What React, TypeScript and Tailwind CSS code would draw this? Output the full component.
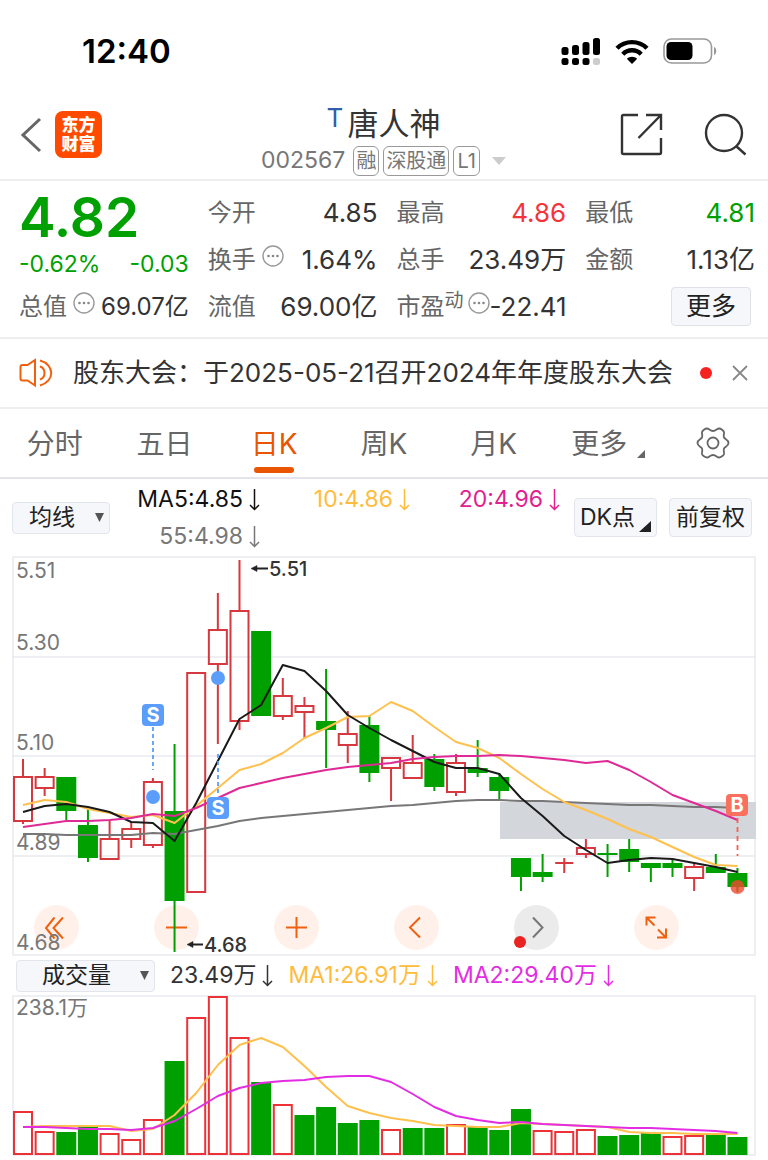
import React, { useState } from 'react';

type Candle = {
  up: boolean;
  high: number;
  top: number;
  bottom: number;
  low: number;
};

const STEP = 21.65;
const cx = (i: number) => 11 + i * STEP;

const c = (up: boolean, high: number, top: number, bottom: number, low: number): Candle => ({
  up,
  high,
  top,
  bottom,
  low
});

const candles: Candle[] = [
  c(true, 203, 221, 265, 268),
  c(true, 212, 221, 232, 240),
  c(false, 221, 221, 255, 264),
  c(false, 253, 269, 302, 306),
  c(true, 264, 283, 303, 303),
  c(true, 266, 273, 283, 292),
  c(true, 222, 226, 289, 292),
  c(false, 188, 255, 345, 396),
  c(true, 117, 117, 336, 336),
  c(true, 37, 74, 108, 188),
  c(true, 4, 55, 165, 174),
  c(false, 75, 75, 160, 160),
  c(true, 122, 140, 160, 164),
  c(true, 141, 150, 156, 183),
  c(false, 113, 165, 174, 212),
  c(true, 155, 178, 189, 207),
  c(false, 160, 169, 217, 226),
  c(true, 202, 202, 212, 245),
  c(true, 179, 207, 222, 222),
  c(false, 198, 203, 231, 235),
  c(true, 198, 207, 236, 240),
  c(false, 184, 212, 217, 221),
  c(false, 217, 221, 235, 244),
  c(false, 302, 302, 321, 335),
  c(false, 298, 316, 321, 326),
  c(true, 302, 307, 307, 317),
  c(true, 283, 292, 298, 302),
  c(false, 288, 297, 299, 321),
  c(false, 283, 293, 306, 316),
  c(false, 307, 307, 312, 326),
  c(false, 303, 307, 312, 321),
  c(true, 307, 311, 322, 335),
  c(false, 298, 311, 317, 317),
  c(false, 312, 317, 331, 336)
];

const ma5 = [
  256, 250, 248, 251, 256, 266, 267, 285, 247, 205, 163, 149, 109, 115, 135, 159, 172, 184, 195,
  206, 212, 212, 218, 242, 260, 280, 294, 307, 304, 302, 303, 307, 311, 316
];
const ma10 = [
  249, 244, 246, 253, 257, 261, 259, 267, 250, 232, 214, 208, 197, 182, 172, 161, 160, 146, 155,
  171, 186, 192, 202, 218, 233, 246, 254, 263, 273, 281, 291, 301, 309, 310
];
const ma20 = [
  271, 268, 265, 265, 264, 262, 258, 260, 252, 242, 232, 227, 222, 218, 214, 211, 209, 207, 203,
  201, 200, 200, 199, 200, 202, 204, 207, 205, 214, 226, 239, 247, 255, 264
];
const ma55 = [
  278, 278, 279, 279, 279, 279, 277, 278, 274, 270, 265, 262, 260, 258, 256, 254, 252, 250, 249,
  247, 245, 244, 244, 245, 245, 246, 247, 248, 249, 249, 250, 251, 251, 252
];

// bar tops, drawn down to y = 160
const volumes: [number, boolean][] = [
  [116, true], [136, true], [137, false], [132, false], [138, true], [144, true], [124, true],
  [66, false], [22, true], [1, true], [42, true], [87, false], [109, true], [120, false],
  [112, false], [128, false], [125, false], [134, true], [133, false], [133, false], [129, true],
  [132, false], [135, false], [114, false], [135, true], [136, true], [134, true], [141, false],
  [140, false], [138, false], [141, true], [140, true], [140, false], [142, false]
];
const volMa1 = [
  132, 131, 131, 131, 131, 136, 134, 120, 98, 70, 50, 43, 52, 71, 92, 111, 118, 123, 126, 130, 131,
  132, 132, 128, 129, 130, 131, 132, 137, 138, 138, 139, 139, 139
];
const volMa2 = [
  132, 132, 133, 134, 134, 135, 133, 126, 114, 101, 93, 88, 86, 85, 82, 81, 81, 87, 99, 112, 121,
  125, 128, 127, 129, 130, 131, 132, 133, 133, 134, 135, 136, 138
];

const toPoints = (ys: number[]) => ys.map((y, i) => `${cx(i)},${y}`).join(' ');

const Line: React.FC<{ ys: number[]; color: string }> = ({ ys, color }) => (
  <polyline points={toPoints(ys)} fill="none" stroke={color} strokeWidth="2" strokeLinejoin="round" />
);

const DownArrow: React.FC = () => (
  <svg className="h-[23px] w-[11px] shrink-0" viewBox="0 0 11 23" fill="none" stroke="currentColor" strokeWidth="1.5">
    <path d="M5.5 1v20.500M1 17l4.500 4.500L10 17" />
  </svg>
);

const InfoDots: React.FC = () => (
  <svg className="mb-2 h-[22px] w-[22px] shrink-0" viewBox="0 0 22 22" aria-hidden="true">
    <circle cx="11" cy="11" r="10" fill="none" stroke="#999" strokeWidth="1.400" />
    <circle cx="6.500" cy="11" r="1.300" fill="#888" />
    <circle cx="11" cy="11" r="1.300" fill="#888" />
    <circle cx="15.500" cy="11" r="1.300" fill="#888" />
  </svg>
);

const StatusBar: React.FC = () => (
  <div className="flex h-[90px] items-center justify-between pt-3 pr-[51px] pl-[82px]">
    <span className="text-[33px] leading-none font-semibold text-black">12:40</span>
    <div className="flex items-center gap-[14px]">
      <svg className="h-[28px] w-[40px]" viewBox="0 0 40 28">
        <rect x="0.500" y="10" width="7" height="8" rx="2.500" />
        <rect x="11" y="8" width="7" height="10" rx="2.500" />
        <rect x="21.500" y="5" width="7" height="13" rx="2.500" />
        <rect x="32" y="1" width="7" height="17" rx="2.500" />
        <rect x="0.500" y="21" width="7" height="7" rx="2.500" />
        <rect x="11" y="21" width="7" height="7" rx="2.500" />
        <rect x="21.500" y="21" width="7" height="7" rx="2.500" />
        <rect x="32" y="21" width="7" height="7" rx="2.500" fill="#ccc" />
      </svg>
      <svg className="h-[25px] w-[34px]" viewBox="0 0 34 25" fill="none" stroke="#000" strokeWidth="4.400">
        <path d="M2 9.300C10 1 24 1 32 9.300" />
        <path d="M7.800 15.200c5-5.200 13.400-5.200 18.400 0" />
        <path d="M17 25l-5.200-5.200c2.800-2.800 7.600-2.800 10.400 0z" fill="#000" stroke="none" />
      </svg>
      <svg className="h-[26px] w-[54px]" viewBox="0 0 54 26">
        <rect x="1" y="1" width="47.500" height="24" rx="7.500" fill="none" stroke="#999" strokeWidth="1.600" />
        <rect x="3.500" y="4" width="26" height="18" rx="4.500" />
        <path d="M51 9v8c3-1 3-7 0-8z" fill="#999" />
      </svg>
    </div>
  </div>
);

const Header: React.FC = () => (
  <header className="grid h-[91px] grid-cols-[1fr_auto_1fr] items-center border-b-2 border-[#eeeef1] pr-[21px] pl-[20px]">
    <div className="flex items-center gap-[13px]">
      <button type="button" aria-label="返回">
        <svg className="h-[36px] w-[22px]" viewBox="0 0 22 36" fill="none" stroke="#666" strokeWidth="3">
          <path d="M20 2L3 18l17 16" />
        </svg>
      </button>
      <div className="flex h-[47px] w-[47px] flex-col items-center justify-center rounded-lg bg-[#ff4a00] text-[17px] leading-[19px] font-black text-white">
        <span>东方</span>
        <span>财富</span>
      </div>
    </div>
    <div className="flex flex-col items-center pt-[8px]">
      <h1 className="flex h-[44px] items-center text-[31px] leading-none text-[#333]">
        <span className="mr-1 mb-3 text-[26px] leading-none text-[#2f5fa8]">T</span>唐人神
      </h1>
      <button type="button" className="flex h-[30px] items-center gap-1 text-[20px] text-[#777]">
        <span className="mr-1 text-[23px]">002567</span>
        <span className="flex h-[30px] items-center rounded-md border border-[#999] px-[2px]">融</span>
        <span className="flex h-[30px] items-center rounded-md border border-[#999] px-[2px]">深股通</span>
        <span className="flex h-[30px] items-center rounded-md border border-[#999] px-[3px]">L1</span>
        <svg className="ml-2 h-[8px] w-[14px]" viewBox="0 0 14 8">
          <path d="M0 0h14L7 8z" fill="#ccc" />
        </svg>
      </button>
    </div>
    <div className="flex items-center justify-end gap-[41px]">
      <button type="button" aria-label="分享">
        <svg className="h-[43px] w-[43px]" viewBox="0 0 43 43" fill="none" stroke="#333" strokeWidth="2.400">
          <path d="M18 2H3.500Q2 2 2 3.500V39.500Q2 41 3.500 41H39.500Q41 41 41 39.500V25M26 2h15v15M41 2L18.500 25" />
        </svg>
      </button>
      <button type="button" aria-label="搜索">
        <svg className="h-[43px] w-[43px]" viewBox="0 0 43 43" fill="none" stroke="#333" strokeWidth="2.400">
          <circle cx="20" cy="20" r="18" />
          <path d="M32 33l9.500 8.500" />
        </svg>
      </button>
    </div>
  </header>
);

const Stat: React.FC<{ label: React.ReactNode; value: string; color?: string }> = ({
  label,
  value,
  color = 'text-[#333]'
}) => (
  <div className="flex h-[47px] items-center justify-between text-[26px] leading-none whitespace-nowrap">
    <dt className="flex items-center gap-[6px] text-[24px] text-[#666]">{label}</dt>
    <dd className={color}>{value}</dd>
  </div>
);

const Quote: React.FC = () => (
  <section className="grid h-[158px] grid-cols-4 gap-x-[19px] border-b-2 border-[#eeeef1] pt-[8px] pr-[13px] pl-[19px]">
    <dl>
      <div className="flex h-[56px] items-center text-[55px] leading-none font-semibold text-[#00a000]">4.82</div>
      <div className="flex h-[38px] items-center justify-between text-[23px] text-[#00a000]">
        <span>-0.62%</span>
        <span>-0.03</span>
      </div>
      <div className="flex h-[47px] items-center justify-between leading-none whitespace-nowrap">
        <dt className="flex items-center gap-[6px] text-[24px] text-[#666]">
          总值
          <InfoDots />
        </dt>
        <dd className="text-[24px] text-[#333]">69.07亿</dd>
      </div>
    </dl>
    <dl>
      <Stat label="今开" value="4.85" />
      <Stat label={<>换手<InfoDots /></>} value="1.64%" />
      <Stat label="流值" value="69.00亿" />
    </dl>
    <dl>
      <Stat label="最高" value="4.86" color="text-[#f5333b]" />
      <Stat label="总手" value="23.49万" />
      <div className="flex h-[47px] items-center justify-between text-[26px] leading-none whitespace-nowrap">
        <dt className="flex items-center text-[24px] text-[#666]">
          市盈<span className="mr-1 mb-3 text-[19px]">动</span>
          <InfoDots />
        </dt>
        <dd className="text-[#333]">-22.41</dd>
      </div>
    </dl>
    <dl>
      <Stat label="最低" value="4.81" color="text-[#00a000]" />
      <Stat label="金额" value="1.13亿" />
      <div className="flex h-[47px] items-center justify-end pr-1">
        <button type="button" className="h-[39px] w-[80px] rounded-sm border border-[#dfe1e8] bg-[#f6f7fa] text-[25px] leading-none text-[#222]">
          更多
        </button>
      </div>
    </dl>
  </section>
);

const News: React.FC = () => (
  <div className="flex h-[70px] items-center border-b-2 border-[#eeeef1] pr-[20px] pl-[19px]">
    <svg className="h-[30px] w-[34px] shrink-0" viewBox="0 0 34 30" fill="none" stroke="#f0610f" strokeWidth="2">
      <path d="M16 2L8.500 7H3.500Q1.500 7 1.500 9V20.500Q1.500 22.500 3.500 22.500H8.500L16 27.500zM21 8.500c6 2 6 11 0 13M21 2.500c15 4 15 21 0 25" />
    </svg>
    <a href="#news" className="ml-[20px] flex-1 text-[26px] leading-none whitespace-nowrap text-[#333]">
      股东大会：于2025-05-21召开2024年年度股东大会
    </a>
    <span className="mr-[20px] h-[12px] w-[12px] shrink-0 rounded-full bg-[#f52222]" />
    <button type="button" aria-label="关闭">
      <svg className="h-[16px] w-[16px]" viewBox="0 0 16 16" stroke="#888" strokeWidth="1.800">
        <path d="M1 1l14 14M15 1L1 15" />
      </svg>
    </button>
  </div>
);

const tabs = ['分时', '五日', '日K', '周K', '月K'];

const Tabs: React.FC = () => {
  const [active, setActive] = useState('日K');

  return (
    <nav className="grid h-[70px] grid-cols-7 border-b-2 border-[#e3e4ec] text-[28px] leading-none text-[#666]">
      {tabs.map((tab) => (
        <button
          key={tab}
          type="button"
          onClick={() => setActive(tab)}
          className={`flex flex-col items-center justify-between pt-[21px] pb-[4px] ${tab === active ? 'text-[#ea5504]' : ''}`}
        >
          {tab}
          <span className={`h-[6px] w-[40px] rounded-full ${tab === active ? 'bg-[#ea5504]' : ''}`} />
        </button>
      ))}
      <button type="button" className="flex items-start justify-end gap-[10px] pt-[21px] pr-[13px]">
        更多
        <svg className="mt-[20px] h-[8px] w-[8px]" viewBox="0 0 8 8">
          <path d="M8 0v8H0z" fill="#666" />
        </svg>
      </button>
      <button type="button" aria-label="设置" className="flex items-center justify-center">
        <svg className="h-[32px] w-[34px]" viewBox="0 0 34 32" fill="none" stroke="#666" strokeWidth="1.800" strokeLinejoin="round">
          <path d="M11 1.500C13 1.500 14 4 17 4S21 1.500 23 1.500C25 1.500 27.500 3.500 28 5C28.500 7 27 8 28 10.500C29 12.500 32.500 12.500 32.500 16S29 19.500 28 21.500C27 24 28.500 25 28 27C27.500 28.500 25 30.500 23 30.500C21 30.500 20 28 17 28S13 30.500 11 30.500C9 30.500 6.500 28.500 6 27C5.500 25 7 24 6 21.500C5 19.500 1.500 19.500 1.500 16S5 12.500 6 10.500C7 8 5.500 7 6 5C6.500 3.500 9 1.500 11 1.500Z" />
          <circle cx="17" cy="16" r="5.500" />
        </svg>
      </button>
    </nav>
  );
};

const Picker: React.FC<{ label: string; value: string; className: string }> = ({ label, value, className }) => (
  <div className={`relative shrink-0 ${className}`}>
    <select
      aria-label={label}
      defaultValue={value}
      className="h-full w-full appearance-none rounded-sm border border-[#e3e5ec] bg-[#f6f7fa] pr-[18px] text-center text-[23px] leading-none text-[#222]"
    >
      <option>{value}</option>
    </select>
    <svg className="pointer-events-none absolute top-[11px] right-[6px] h-[9px] w-[9px]" viewBox="0 0 9 9">
      <path d="M0 0h9L4.500 9z" fill="#555" />
    </svg>
  </div>
);

const Average: React.FC<{ text: string; color: string }> = ({ text, color }) => (
  <span className={`flex items-center justify-end gap-[6px] whitespace-nowrap ${color}`}>
    {text}
    <DownArrow />
  </span>
);

const Indicators: React.FC = () => (
  <div className="flex h-[77px] items-center px-[12px]">
    <Picker label="主图指标" value="均线" className="h-[32px] w-[98px]" />
    <div className="grid flex-1 grid-cols-3 self-start pt-[2px] pr-[14px] text-[23px] leading-[37px]">
      <Average text="MA5:4.85" color="text-[#111]" />
      <Average text="10:4.86" color="text-[#ffbc3c]" />
      <Average text="20:4.96" color="text-[#e0218f]" />
      <Average text="55:4.98" color="text-[#777]" />
    </div>
    <div className="flex gap-[12px] pr-[4px]">
      <button type="button" className="flex h-[39px] w-[83px] items-center justify-between rounded-sm border border-[#e3e5ec] bg-[#f6f7fa] px-[5px] text-[23px] leading-none whitespace-nowrap text-[#222]">
        DK点
        <svg className="mt-[18px] h-[11px] w-[12px] shrink-0" viewBox="0 0 12 11">
          <path d="M12 0v11H0z" fill="#222" />
        </svg>
      </button>
      <button type="button" className="h-[39px] w-[83px] rounded-sm border border-[#e3e5ec] bg-[#f6f7fa] text-[23px] leading-none text-[#222]">
        前复权
      </button>
    </div>
  </div>
);

const controls = [
  { label: '最早', d: 'M20.500 12.500L12 23l8.500 10.500M29 12.500L19.500 23l9.500 10.500' },
  { label: '缩小', d: 'M12 22.500h21' },
  { label: '放大', d: 'M12 22.500h21M22.500 12v21' },
  { label: '向左', d: 'M26 12.500L16 22.500l10 10' },
  { label: '向右', d: 'M19 12.500l9.500 10L19 32.500' },
  { label: '全屏', d: 'M12.500 20.500V12.500h9M13 13l7.500 7.500M32 23.500v9h-9M31.500 32l-7.500-7.500' }
];

const Signal: React.FC<{ x: number; y: number; text: string; color: string }> = ({ x, y, text, color }) => (
  <g>
    <rect x={x - 11} y={y - 11} width="22" height="22" rx="4" fill={color} />
    <text x={x} y={y + 7} textAnchor="middle" fontSize="20" fontWeight="700" fill="#fff">
      {text}
    </text>
  </g>
);

const PriceChart: React.FC = () => (
  <div className="relative">
    <div className="absolute inset-x-0 bottom-[6px] flex justify-between pr-[77px] pl-[22px]">
      {controls.map(({ label, d }) => (
        <button
          key={label}
          type="button"
          aria-label={label}
          className={`relative h-[45px] w-[45px] rounded-full ${label === '向右' ? 'bg-[#ebebeb] text-[#777]' : 'bg-[#fff1ea] text-[#f0610f]'}`}
        >
          <svg className="h-[45px] w-[45px]" viewBox="0 0 45 45" fill="none" stroke="currentColor" strokeWidth="2">
            <path d={d} />
          </svg>
          {label === '向右' && <span className="absolute bottom-[2px] left-0 h-[12px] w-[12px] rounded-full bg-[#e92222]" />}
        </button>
      ))}
    </div>
    <svg className="pointer-events-none relative block w-full" viewBox="0 0 744 400">
      <path d="M1 1h742v398H1zM0 101h744M0 200h744M0 300h744" fill="none" stroke="#e8eaf0" strokeWidth="1.500" />
      <rect x="488" y="246" width="256" height="37" fill="#d3d6db" />
      <g fontSize="21" fill="#777">
        <text x="4" y="22">5.51</text>
        <text x="4" y="94">5.30</text>
        <text x="4" y="194">5.10</text>
        <text x="4" y="294">4.89</text>
        <text x="4" y="394">4.68</text>
      </g>
      {candles.map(({ up, high, top, bottom, low }, i) =>
        up ? (
          <path
            key={i}
            d={`M${cx(i)} ${high}V${top}M${cx(i)} ${bottom}V${low}M${cx(i) - 9} ${top}h18V${bottom}h-18z`}
            fill="none"
            stroke="#d7373f"
            strokeWidth="2"
          />
        ) : (
          <g key={i} fill="#00a000">
            <rect x={cx(i) - 1} y={high} width="2" height={low - high} />
            <rect x={cx(i) - 10} y={top} width="20" height={bottom - top} />
          </g>
        )
      )}
      <Line ys={ma55} color="#777" />
      <Line ys={ma10} color="#ffc04d" />
      <Line ys={ma5} color="#1a1a1a" />
      <Line ys={ma20} color="#df2a96" />
      <g stroke="#5a9dfa" strokeWidth="1.800" strokeDasharray="4 3">
        <path d="M141 171v43M206 198v42" />
      </g>
      <path d="M725.500 262v38" stroke="#f5604f" strokeWidth="1.800" strokeDasharray="5 4" />
      <circle cx="141" cy="241" r="7" fill="#5a9dfa" />
      <circle cx="206" cy="122" r="7" fill="#5a9dfa" />
      <circle cx="725.500" cy="331" r="7" fill="#f04a30" fillOpacity="0.800" />
      <Signal x={141} y={159} text="S" color="#5a9dfa" />
      <Signal x={206} y={252} text="S" color="#5a9dfa" />
      <Signal x={725} y={249} text="B" color="#f9705f" />
      <g stroke="#222" strokeWidth="1.800" fill="#222">
        <path d="M242 12.500h14M178 388.500h13" />
        <path d="M239 12.500l6-3v6zM175 388.500l6-3v6z" strokeWidth="0.500" />
      </g>
      <g fontSize="20" fontWeight="500" fill="#333">
        <text x="257" y="20">5.51</text>
        <text x="192" y="396">4.68</text>
      </g>
    </svg>
  </div>
);

const VolumeChart: React.FC = () => (
  <svg className="block w-full" viewBox="0 0 744 161">
    <path d="M1 1h742v159H1z" fill="none" stroke="#e8eaf0" strokeWidth="1.500" />
    <text x="4" y="20" fontSize="21" fill="#777">238.1万</text>
    {volumes.map(([top, up], i) =>
      up ? (
        <rect key={i} x={cx(i) - 9} y={top + 1} width="18" height={158 - top} fill="none" stroke="#ec3237" strokeWidth="2" />
      ) : (
        <rect key={i} x={cx(i) - 10} y={top} width="20" height={160 - top} fill="#00a000" />
      )
    )}
    <Line ys={volMa1} color="#ffc04d" />
    <Line ys={volMa2} color="#e32de3" />
  </svg>
);

const App: React.FC = () => (
  <main className="w-full bg-white pb-1 font-['Inter','Noto_Sans_CJK_SC',sans-serif]">
    <StatusBar />
    <Header />
    <Quote />
    <News />
    <Tabs />
    <Indicators />
    <section className="px-[12px]">
      <PriceChart />
      <div className="flex h-[39px] items-center gap-[15px] pl-[4px] text-[23px] leading-none">
        <Picker label="副图指标" value="成交量" className="h-[32px] w-[139px]" />
        <Average text="23.49万" color="text-[#333]" />
        <Average text="MA1:26.91万" color="text-[#ffbc3c]" />
        <Average text="MA2:29.40万" color="text-[#e32de3]" />
      </div>
      <VolumeChart />
    </section>
  </main>
);

export default App;
